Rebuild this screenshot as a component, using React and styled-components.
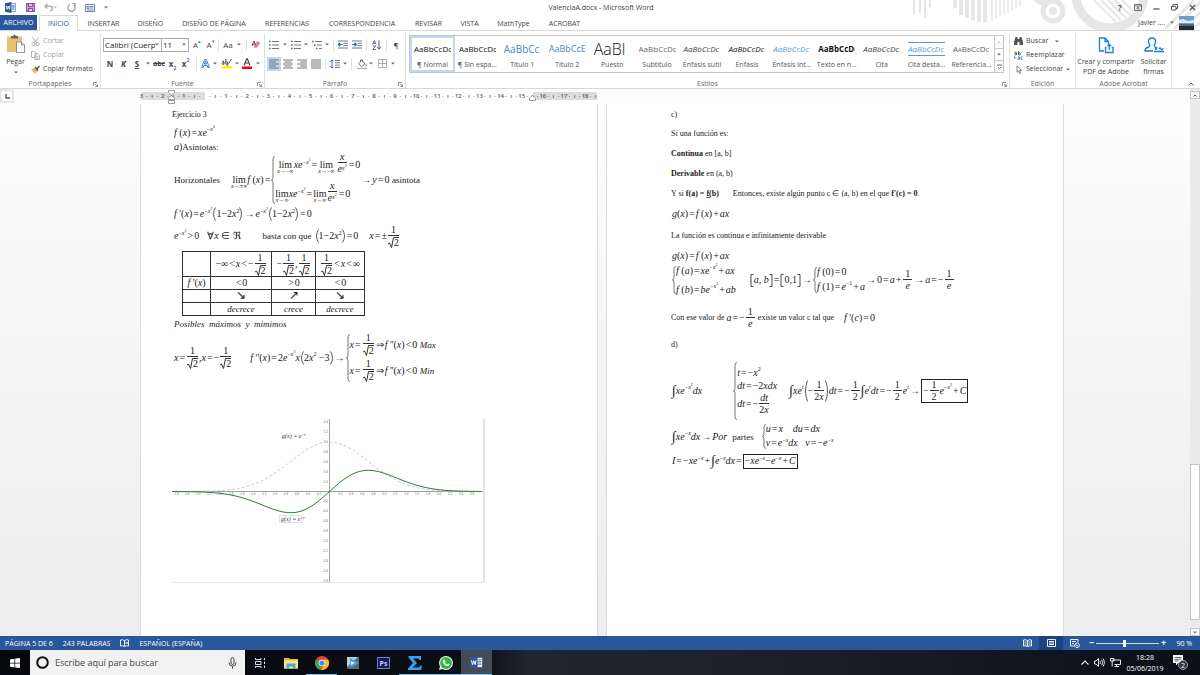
import styled, { createGlobalStyle, css } from 'styled-components';

const GlobalStyle = createGlobalStyle`
    * {
        box-sizing: border-box;
    }
    body {
        margin: 0;
        font-family: 'Open Sans', 'Noto Sans', sans-serif;
        font-size: 7px;
        color: #444;
    }
    button,
    input,
    select {
        margin: 0;
        padding: 0;
        border: 0;
        background: none;
        font: inherit;
        color: inherit;
    }
    svg {
        display: block;
        flex: none;
    }
`;

const Window = styled.div`
    display: flex;
    flex-direction: column;
    height: 100vh;
    min-height: 675px;
    overflow: hidden;
    background: #fff;
`;

/* ---------- title bar and tabs ---------- */

const Header = styled.header`
    position: relative;
`;

const Decoration = styled.svg`
    position: absolute;
    top: 0;
    right: 0;
`;

const TitleBar = styled.div`
    position: relative;
    display: grid;
    grid-template-columns: 1fr auto 1fr;
    align-items: center;
    height: 15px;
    padding: 0 3px 0 5px;
    font-size: 7px;
`;

const QuickAccess = styled.div`
    display: flex;
    align-items: center;
    gap: 9px;
`;

const WindowButtons = styled.div`
    display: flex;
    align-items: center;
    justify-content: flex-end;
    gap: 8px;
`;

const IconButton = styled.button`
    display: flex;
    align-items: center;
    justify-content: center;
    min-width: 10px;
    height: 12px;
    font-size: 8px;
    color: ${(p) => p.$color || '#555'};
`;

const Tabs = styled.nav`
    position: relative;
    display: flex;
    align-items: stretch;
    height: 16px;
    border-bottom: 1px solid #d8d8d8;
`;

const Tab = styled.a`
    display: flex;
    align-items: center;
    justify-content: center;
    margin-bottom: -1px;
    width: ${(p) => p.$w}px;
    color: #444;
    text-decoration: none;
    white-space: nowrap;
    ${(p) =>
        p.$file &&
        css`
            background: #2a579a;
            color: #fff;
            margin-bottom: 0;
            margin-right: 2px;
        `}
    ${(p) =>
        p.$active &&
        css`
            background: #fff;
            border: 1px solid #d8d8d8;
            border-bottom: 0;
            color: #2a579a;
        `}
`;

const Account = styled.div`
    display: flex;
    align-items: center;
    gap: 5px;
    margin-left: auto;
    padding-right: 6px;
`;

/* ---------- ribbon ---------- */

const Ribbon = styled.section`
    display: flex;
    height: 58px;
    padding: 3px 0 0;
    border-bottom: 1px solid #d8d8d8;
`;

const Group = styled.div`
    display: flex;
    flex-direction: column;
    flex: ${(p) => (p.$w ? `0 0 ${p.$w}px` : '1 1 0')};
    min-width: 0;
    border-right: 1px solid #e1e1e1;
`;

const GroupBody = styled.div`
    flex: 1;
    min-height: 0;
    padding-left: ${(p) => p.$pad || 0}px;
`;

const GroupLabel = styled.div`
    display: flex;
    align-items: center;
    justify-content: center;
    position: relative;
    height: 8px;
    line-height: 8px;
    color: #666;
    svg {
        position: absolute;
        right: 2px;
        top: 2px;
    }
`;

const ToolRow = styled.div`
    display: flex;
    align-items: center;
    height: 13px;
    margin-top: ${(p) => p.$top}px;
`;

const Tool = styled.button`
    display: flex;
    align-items: center;
    justify-content: center;
    width: ${(p) => p.$w}px;
    height: 14px;
    font-size: 8px;
    font-weight: ${(p) => (p.$bold ? 700 : 400)};
    font-style: ${(p) => (p.$italic ? 'italic' : 'normal')};
    text-decoration: ${(p) => p.$deco || 'none'};
    color: ${(p) => p.$color || '#444'};
    background: ${(p) => (p.$on ? '#c2d5f2' : 'transparent')};
    sub,
    sup {
        font-size: 5px;
        line-height: 6px;
        color: #3b73b9;
    }
    sup {
        align-self: flex-start;
    }
    sub {
        align-self: flex-end;
    }
`;

const Divider = styled.span`
    display: flex;
    justify-content: center;
    width: ${(p) => p.$w}px;
    &::before {
        content: '';
        width: 1px;
        height: 12px;
        background: #e1e1e1;
    }
`;

const ComboBox = styled.label`
    display: flex;
    align-items: center;
    width: ${(p) => p.$w}px;
    height: 14px;
    padding: 0 2px 0 1px;
    border: 1px solid #ababab;
    font-size: 8px;
    color: #222;
    & + & {
        border-left: 0;
    }
    select {
        appearance: none;
        flex: 1;
        min-width: 0;
        overflow: hidden;
        text-overflow: clip;
    }
`;

const Clipboard = styled.div`
    display: grid;
    grid-template-columns: 31px 1fr;
`;

const BigButton = styled.button`
    display: flex;
    flex-direction: column;
    align-items: center;
    gap: ${(p) => p.$gap || 3}px;
    line-height: 10px;
    font-size: 7px;
    color: #444;
`;

const ButtonList = styled.div`
    display: flex;
    flex-direction: column;
`;

const SmallButton = styled.button`
    display: flex;
    align-items: center;
    gap: 3px;
    height: 14px;
    line-height: 14px;
    white-space: nowrap;
    color: ${(p) => (p.$off ? '#a0a0a0' : '#444')};
`;

const Gallery = styled.div`
    display: flex;
    height: 38px;
    margin: 1px 5px 0 3px;
    border: 1px solid #c6c6c6;
`;

const Styles = styled.div`
    display: grid;
    grid-template-columns: repeat(13, 1fr);
    flex: 1;
    min-width: 0;
`;

const StyleCard = styled.button`
    display: flex;
    flex-direction: column;
    align-items: center;
    min-width: 0;
    padding: ${(p) => (p.$on ? '0 1px' : '2px 3px')};
    border: ${(p) => (p.$on ? '2px solid #c2d5f2' : '0')};
`;

const Sample = styled.span`
    width: 37px;
    height: 22px;
    line-height: 22px;
    overflow: hidden;
    text-align: left;
    white-space: nowrap;
    font-weight: ${(p) => p.$weight || 500};
    font-style: ${(p) => (p.$italic ? 'italic' : 'normal')};
    font-variant: ${(p) => (p.$caps ? 'small-caps' : 'normal')};
    font-size: ${(p) => p.$size || 8}px;
    color: ${(p) => p.$color || '#111'};
`;

const RuledSample = styled(Sample)`
    height: 14px;
    line-height: 12px;
    margin: 4px 0;
    border-top: 1px solid #5b9bd5;
    border-bottom: 1px solid #5b9bd5;
`;

const CardName = styled.span`
    line-height: 10px;
    white-space: nowrap;
    color: #555;
`;

const GalleryScroll = styled.div`
    display: grid;
    grid-template-rows: repeat(3, 1fr);
    width: 9px;
    border-left: 1px solid #c6c6c6;
    button {
        display: flex;
        align-items: center;
        justify-content: center;
    }
    button + button {
        border-top: 1px solid #c6c6c6;
    }
`;

const AcrobatButtons = styled.div`
    display: grid;
    grid-template-columns: 60px 1fr;
    padding-top: 3px;
    white-space: nowrap;
`;

const Collapse = styled.div`
    display: flex;
    flex: 0 0 28px;
    align-items: flex-end;
    justify-content: center;
    padding: 0 0 2px 10px;
`;

/* ---------- ruler and canvas ---------- */

const Workspace = styled.main`
    display: flex;
    flex: 1;
    min-height: 0;
    background: linear-gradient(#fdfdfd 5%, #eee 90%);
`;

const Editor = styled.div`
    display: flex;
    flex-direction: column;
    flex: 1;
    min-width: 0;
`;

const Columns = styled.div`
    display: flex;
    justify-content: center;
    gap: 10px;
    padding-left: 14px;
`;

const RulerRow = styled.div`
    display: grid;
    grid-template-columns: 14px 1fr;
    height: 15px;
`;

const TabSelector = styled.button`
    display: flex;
    align-items: center;
    justify-content: center;
    height: 14px;
    background: #fcfcfc;
    border: 2px solid #e6e6e6;
`;

const RulerColumns = styled(Columns)`
    padding-left: 0;
`;

const Scale = styled.div`
    position: relative;
    display: flex;
    align-items: center;
    justify-content: space-between;
    flex: 0 1 456px;
    height: 8px;
    margin-top: 3px;
    font-size: 6px;
    font-weight: 600;
    color: #555;
    background: linear-gradient(to right, #dcdcdc 14%, #fff 14%, #fff 86%, #dcdcdc 86%);
    span {
        display: flex;
        justify-content: center;
        width: 1px;
    }
`;

const Blank = styled.div`
    flex: 0 1 456px;
`;

const Marker = styled.svg`
    position: absolute;
    left: ${(p) => p.$at}%;
    top: ${(p) => p.$top}px;
`;

const Pages = styled(Columns)`
    flex: 1;
    min-height: 0;
`;

const Page = styled.article`
    flex: 0 1 456px;
    min-width: 0;
    padding-left: ${(p) => p.$pad}px;
    overflow: hidden;
    background: #fff;
    box-shadow: -1px 0 #dcdcdc, 1px 0 #dcdcdc;
    color: #222;
    font-family: 'Liberation Serif', serif;
`;

const Scrollbar = styled.div`
    display: flex;
    flex-direction: column;
    width: 10px;
    padding-top: 2px;
    background: #ebebeb;
    button {
        display: flex;
        align-items: center;
        justify-content: center;
        height: 8px;
        border: 1px solid #c6c6c6;
        background: #fff;
    }
`;

const Track = styled.div`
    display: grid;
    grid-template-rows: 364fr 155fr 8fr;
    flex: 1;
    &::before {
        content: '';
    }
    &::after {
        content: '';
    }
`;

const Thumb = styled.div`
    border: 1px solid #c6c6c6;
    background: #fff;
`;

/* ---------- formulas ---------- */

const Line = styled.div`
    display: flex;
    align-items: center;
    height: ${(p) => p.$h}px;
    margin-top: ${(p) => p.$top || 0}px;
    padding-left: ${(p) => p.$in || 0}px;
    font-size: 8px;
    white-space: pre;
`;

const Formula = styled.span`
    display: inline-flex;
    align-items: center;
    font-size: 10px;
    line-height: 10px;
    white-space: pre;
`;

const Operator = styled.span`
    margin: 0 1px;
`;

const Upright = styled.span`
    font-size: 9px;
`;

const Words = styled.i`
    font-size: 9px;
`;

const SupBox = styled.span`
    display: inline-flex;
    align-items: center;
    padding-bottom: 7px;
    font-size: 6px;
    line-height: 6px;
    white-space: pre;
    & & {
        font-size: 4px;
        line-height: 4px;
        padding-bottom: 4px;
    }
`;

const FracBox = styled.span`
    display: inline-flex;
    flex-direction: column;
    align-items: center;
    margin: 0 1px;
    > span {
        display: flex;
        justify-content: center;
        min-width: 9px;
    }
    > span + span {
        border-top: 1px solid #333;
        padding-top: 1px;
    }
`;

const LimBox = styled.span`
    display: inline-flex;
    flex-direction: column;
    align-items: center;
    line-height: 8px;
    padding-top: 4px;
    small {
        font-size: 6px;
        line-height: 4px;
    }
`;

const RootBox = styled.span`
    display: inline-flex;
    span {
        border-top: 1px solid #333;
        line-height: 10px;
    }
`;

const Stack = styled.span`
    display: inline-flex;
    flex-direction: column;
    align-items: flex-start;
    gap: ${(p) => p.$gap || 0}px;
`;

const Space = styled.span`
    flex: none;
    width: ${(p) => p.$w}px;
`;

const Boxed = styled.span`
    display: inline-flex;
    align-items: center;
    padding: 0 1px;
    border: 1px solid #222;
`;

const IntegralSign = styled.span`
    font-size: 14px;
    line-height: 14px;
`;

const SignTable = styled.table`
    table-layout: fixed;
    width: 183px;
    margin: 1px 0 0 10px;
    border-collapse: collapse;
    td,
    th {
        height: 13px;
        padding: 0;
        border: 1px solid #333;
        text-align: center;
        vertical-align: middle;
        font-weight: 400;
        font-size: 9px;
        line-height: 9px;
    }
    thead th {
        height: 25px;
    }
`;

const Arrow = styled.span`
    font-size: 12px;
`;

const Spelling = styled.b`
    text-decoration: underline #4a5bd0;
`;

const Figure = styled.figure`
    width: 313px;
    margin: 36px 0 0;
    border-right: 2px solid #e3e3e3;
    border-bottom: 1px solid #e3e3e3;
`;

/* ---------- status bar and taskbar ---------- */

const StatusBar = styled.footer`
    display: flex;
    align-items: center;
    flex: none;
    height: 14px;
    padding: 0 8px 0 5px;
    background: #2a579a;
    color: #fff;
    font-size: 7px;
`;

const StatusLeft = styled.div`
    display: flex;
    align-items: center;
    gap: 10px;
    flex: 1;
`;

const ViewButton = styled.button`
    display: flex;
    align-items: center;
    justify-content: center;
    width: 24px;
    height: 14px;
    background: ${(p) => (p.$on ? '#1b4380' : 'transparent')};
`;

const ZoomSlider = styled.input`
    appearance: none;
    width: 63px;
    height: 10px;
    background: linear-gradient(#cfdcef, #cfdcef) center / 100% 1px no-repeat;
    &::-webkit-slider-thumb {
        appearance: none;
        width: 3px;
        height: 7px;
        background: #fff;
    }
`;

const ZoomButton = styled.button`
    width: 9px;
    font-size: 9px;
    font-weight: 700;
    line-height: 12px;
`;

const ZoomValue = styled.span`
    width: 24px;
    text-align: right;
`;

const Taskbar = styled.footer`
    display: flex;
    flex: none;
    height: 25px;
    background: linear-gradient(to right, #05070c, #0b0e14 40%, #20262d 44%, #1a1f27 70%, #0e131c 90%, #0b0f16);
    color: #fff;
`;

const Search = styled.label`
    display: flex;
    align-items: center;
    gap: 6px;
    width: 215px;
    padding: 0 8px 0 6px;
    background: #f2f2f2;
    color: #333;
    input {
        flex: 1;
        min-width: 0;
        font-size: 9px;
        outline: 0;
    }
    input::placeholder {
        color: #444;
        opacity: 1;
    }
`;

const TaskButton = styled.button`
    display: flex;
    align-items: center;
    justify-content: center;
    width: ${(p) => p.$w || 31}px;
    background: ${(p) => (p.$on ? '#454b52' : 'transparent')};
    box-shadow: ${(p) => (p.$open ? 'inset 0 -1px #8ac4ef' : 'none')};
`;

const Tray = styled.div`
    display: flex;
    align-items: center;
    gap: 5px;
    margin-left: auto;
    padding-right: 12px;
`;

const Clock = styled.time`
    width: 38px;
    text-align: center;
    font-size: 7px;
    line-height: 11px;
    white-space: nowrap;
`;

const Notifications = styled.button`
    margin-left: 4px;
`;

/* ---------- drawings ---------- */

function Caret({ color = '#666' }) {
    return (
        <svg width="4" height="3" viewBox="0 0 4 3">
            <path d="M0 0.5h4L2 2.6z" fill={color} />
        </svg>
    );
}

function WordLogo({ size = 11 }) {
    return (
        <svg width={size} height={size} viewBox="0 0 12 12">
            <path d="M6 1.5h5.5v9H6z" fill="#fff" stroke="#2a579a" strokeWidth=".6" />
            <path d="M7 3.5h3.6M7 5h3.6M7 6.5h3.6M7 8h3.6" stroke="#2a579a" strokeWidth=".7" />
            <path d="M0 1.3 7 0v12L0 10.7z" fill="#2a579a" />
            <path d="m1.4 4 .9 4 1.2-3.6L4.7 8l.9-4" fill="none" stroke="#fff" strokeWidth=".9" />
        </svg>
    );
}

function Stroke({ w = 10, h = 10, color = 'currentColor', width = 1, children, d }) {
    return (
        <svg width={w} height={h} viewBox={`0 0 ${w} ${h}`} fill="none" stroke={color} strokeWidth={width}>
            {d && <path d={d} />}
            {children}
        </svg>
    );
}

function HeaderArt() {
    const bars = [
        [4, 14], [10, 13], [15, 18], [20, 7], [45, 8], [51, 15], [57, 18], [63, 20], [69, 22], [75, 22],
    ];
    return (
        <Decoration width="290" height="30" viewBox="0 0 290 30" fill="none" stroke="#e6e6e6">
            {bars.map(([x, h]) => (
                <path key={x} d={`M${x} 0V${h}`} strokeWidth={x < 40 ? 2 : 4} />
            ))}
            {[82, 86, 90, 94, 98, 102, 106, 110].map((x, i) => (
                <path key={x} d={`M${x} 0V${21 - i * 2}`} strokeWidth="1.5" />
            ))}
            <path d="M124 0q7 10 15 0z" fill="#e6e6e6" stroke="none" />
            <circle cx="143" cy="11" r="10" strokeWidth="5" />
            <circle cx="143" cy="11" r="4" fill="#e6e6e6" stroke="none" />
            <circle cx="200" cy="-6" r="34" strokeWidth="9" />
            <path d="M184 0l22 22M191 0l20 20M198 0l18 18M205 0l15 15M212 0l11 11" strokeWidth="2" />
            <path d="M290 2l-26 27M290 12l-17 18M284 0l-28 28M290 22l-8 8" strokeWidth="3" />
        </Decoration>
    );
}

function Launcher() {
    return <Stroke w={5} h={5} color="#777" width={0.8} d="M.5 4V.5H4M2 2l2.5 2.5M4.5 2.3v2.2H2.3" />;
}

function Lines({ align = 'left' }) {
    const rows = [10, 7, 10, 7, 10];
    return (
        <svg width="10" height="10" viewBox="0 0 10 10" stroke="#666" strokeWidth=".9">
            {rows.map((len, i) => {
                const n = align === 'justify' ? 10 : len;
                const x = { left: 0, justify: 0, center: (10 - n) / 2, right: 10 - n }[align];
                return <path key={i} d={`M${x} ${1 + i * 2}h${n}`} />;
            })}
        </svg>
    );
}

function ListIcon({ step = 0 }) {
    return (
        <svg width="10" height="10" viewBox="0 0 10 10" strokeWidth="1">
            {[1.5, 5, 8.5].map((y, i) => (
                <g key={y}>
                    <path d={`M${i * step} ${y}h1.6`} stroke="#3b73b9" strokeWidth="1.5" />
                    <path d={`M${3 + i * step} ${y}H10`} stroke="#777" />
                </g>
            ))}
        </svg>
    );
}

function IndentIcon({ flip }) {
    return (
        <svg width="10" height="9" viewBox="0 0 10 9" fill="none" strokeWidth="1">
            <path d="M0 1h10M5.5 3.3H10M5.5 5.6H10M0 8h10" stroke="#777" />
            <path d={flip ? 'M0 4.5h4M2.5 2.8l2 1.7-2 1.7' : 'M.5 4.5h4M2.2 2.8.4 4.5l1.8 1.7'} stroke="#2f6db5" strokeWidth="1.2" />
        </svg>
    );
}

function Brace({ h }) {
    const m = h / 2;
    return (
        <svg width="4" height={h} viewBox={`0 0 4 ${h}`} fill="none" stroke="#555" strokeWidth=".8">
            <path d={`M4 .5Q2 .5 2 3V${m - 2.5}Q2 ${m} .3 ${m}Q2 ${m} 2 ${m + 2.5}V${h - 3}Q2 ${h - 0.5} 4 ${h - 0.5}`} />
        </svg>
    );
}

function Paren({ h, right }) {
    const d = right ? `M.5 .5Q4.5 ${h / 2} .5 ${h - 0.5}` : `M3.5 .5Q-.5 ${h / 2} 3.5 ${h - 0.5}`;
    return (
        <svg width="4" height={h} viewBox={`0 0 4 ${h}`} fill="none" stroke="#333" strokeWidth=".8">
            <path d={d} />
        </svg>
    );
}

function Bracket({ right }) {
    return <Stroke w={4} h={13} color="#333" width={0.9} d={right ? 'M.5 .5H3v12H.5' : 'M3.5 .5H1v12h2.5'} />;
}

/* letters slanted, digits upright, a thin gap round each operator */
function M({ children }) {
    return (
        <Formula>
            {String(children)
                .split(/([A-Za-zÀ-ÿ]+)| *([=+<>→⇒]) */)
                .map((part, i) => {
                    if (!part) return null;
                    if (i % 3 === 1) return <i key={i}>{part}</i>;
                    if (i % 3 === 2) return <Operator key={i}>{part}</Operator>;
                    return <span key={i}>{part}</span>;
                })}
        </Formula>
    );
}

function Sup({ children }) {
    return <SupBox>{children}</SupBox>;
}

function ExpSq() {
    return (
        <Sup>
            −<i>x</i>
            <SupBox>2</SupBox>
        </Sup>
    );
}

function ExpX() {
    return (
        <Sup>
            −<i>x</i>
        </Sup>
    );
}

function Frac({ top, children }) {
    return (
        <FracBox>
            <span>{top}</span>
            <span>{children}</span>
        </FracBox>
    );
}

function Root() {
    return (
        <RootBox>
            <Stroke w={6} h={11} color="#333" width={1} d="M0 7l1.5-1L3.5 10.5 5.5.5H6" />
            <span>2</span>
        </RootBox>
    );
}

function OneOverRoot() {
    return <Frac top="1"><Root /></Frac>;
}

function XOverExp() {
    return (
        <Frac top={<i>x</i>}>
            <i>e</i>
            <Sup><i>x</i><SupBox>2</SupBox></Sup>
        </Frac>
    );
}

function Lim({ to }) {
    return (
        <LimBox>
            lim
            <small>
                <i>x</i>→{to}
            </small>
        </LimBox>
    );
}

function Parens({ children, h = 14 }) {
    return (
        <Formula>
            <Paren h={h} />
            {children}
            <Paren h={h} right />
        </Formula>
    );
}

function Integral() {
    return <IntegralSign>∫</IntegralSign>;
}

function Plot() {
    const curve = (f) => {
        const pts = [];
        for (let px = 0; px <= 311; px += 3) {
            const x = (px - 157.5) / 54.8;
            pts.push(`${px},${(72.5 - f(x) * 49.5).toFixed(2)}`);
        }
        return pts.join(' ');
    };
    const xs = Array.from({ length: 28 }, (_, i) => i - 14).filter((n) => n !== 0);
    const ys = Array.from({ length: 17 }, (_, i) => i - 9).filter((n) => n !== 0);
    return (
        <Figure>
            <svg width="311" height="163" viewBox="0 0 311 163" fontSize="3" fill="#666" fontFamily="Liberation Sans, sans-serif">
                <path d="M157.5 0v163M0 72.5h311" stroke="#8a8a8a" strokeWidth=".8" />
                {xs.map((n) => (
                    <text key={n} x={157.5 + n * 10.96} y="76" textAnchor="middle">
                        {(n / 5).toFixed(1)}
                    </text>
                ))}
                {ys.map((n) => (
                    <text key={n} x="156" y={73.5 - n * 9.9} textAnchor="end">
                        {(n / 5).toFixed(1)}
                    </text>
                ))}
                <polyline points={curve((x) => Math.exp(-x * x))} fill="none" stroke="#c3bcf5" strokeWidth=".9" strokeDasharray="3 2" />
                <polyline points={curve((x) => x * Math.exp(-x * x))} fill="none" stroke="#2f8132" strokeWidth="1" />
                <rect x="107.5" y="96.5" width="22" height="7" fill="#fff" stroke="#ccc" strokeWidth=".6" />
                <g fontSize="6" fontFamily="Liberation Serif, serif" fontStyle="italic" fill="#333">
                    <text x="110" y="19">
                        g(x) = e<tspan fontSize="3" dy="-2">−x²</tspan>
                    </text>
                    <text x="109" y="102">
                        g(x) = e<tspan fontSize="3" dy="-2">−x²</tspan>
                    </text>
                </g>
            </svg>
        </Figure>
    );
}

/* ---------- sections ---------- */

const tabs = [
    ['INSERTAR', 51],
    ['DISEÑO', 43],
    ['DISEÑO DE PÁGINA', 84],
    ['REFERENCIAS', 62],
    ['CORRESPONDENCIA', 88],
    ['REVISAR', 45],
    ['VISTA', 37],
    ['MathType', 51],
    ['ACROBAT', 51],
];

const gallery = [
    { name: '¶ Normal', on: true },
    { name: '¶ Sin espa...' },
    { name: 'Título 1', color: '#4a8ac4', size: 10, text: 'AaBbCc', weight: 400 },
    { name: 'Título 2', color: '#4a8ac4', size: 9, text: 'AaBbCcE', weight: 400 },
    { name: 'Puesto', size: 16, text: 'AaBl', weight: 300 },
    { name: 'Subtítulo', color: '#6a6a6a' },
    { name: 'Énfasis sutil', color: '#444', italic: true },
    { name: 'Énfasis', italic: true },
    { name: 'Énfasis int...', color: '#5b9bd5', italic: true },
    { name: 'Texto en n...', weight: 700 },
    { name: 'Cita', color: '#444', italic: true },
    { name: 'Cita desta...', color: '#5b9bd5', italic: true, ruled: true },
    { name: 'Referencia...', color: '#5a5a5a', caps: true },
];

function Top() {
    return (
        <Header>
            <HeaderArt />
            <TitleBar>
                <QuickAccess>
                    <WordLogo />
                    <IconButton aria-label="Guardar">
                        <Stroke w={9} h={9} color="#8b4bab" width={1.3} d="M.7.7h7.600v7.600H.7zM2.500.5v3h4v-3M2.500 8.500v-3h4v3" />
                    </IconButton>
                    <IconButton aria-label="Deshacer" $color="#aaa">
                        <Stroke w={9} h={9} width={1.3} d="M3.5 1 1 3.2l2.500 2.200M1.200 3.200H6q2.300 0 2.300 2.200T6 8" />
                        <Caret color="#bbb" />
                    </IconButton>
                    <IconButton aria-label="Rehacer" $color="#999">
                        <Stroke w={9} h={9} width={1.2} d="M7 2.2A3.600 3.600 0 1 1 3 1.500M5.500.7h2.600v2.600" />
                    </IconButton>
                    <IconButton aria-label="Formulario">
                        <Stroke w={10} h={8} color="#5d7aa5" width={0.9} d="M.5.5h9v7h-9zM2 2.500h2v2H2zM5 2.500h3.500M5 4h3.500M2 6h6.500" />
                    </IconButton>
                    <Caret />
                </QuickAccess>
                <span>ValenciaA.docx - Microsoft Word</span>
                <WindowButtons>
                    <IconButton aria-label="Ayuda"><b>?</b></IconButton>
                    <IconButton aria-label="Opciones de cinta">
                        <Stroke w={8} h={7} d="M.5.5h7v6h-7zM.5 2h7M4 5.800V3.400M2.700 4.500 4 3.200l1.300 1.300" width={0.8} />
                    </IconButton>
                    <IconButton aria-label="Minimizar"><Stroke w={7} h={7} d="M.5 5h6" width={1.3} /></IconButton>
                    <IconButton aria-label="Restaurar">
                        <Stroke w={7} h={7} d="M.5 2.500h4.500v3.500H.5zM2 2.500v-2h4.500v4H5" />
                    </IconButton>
                    <IconButton aria-label="Cerrar"><Stroke w={7} h={7} d="M1 1l5 5M6 1 1 6" width={1.2} /></IconButton>
                </WindowButtons>
            </TitleBar>
            <Tabs>
                <Tab href="#archivo" $w={37} $file>ARCHIVO</Tab>
                <Tab href="#inicio" $w={39} $active>INICIO</Tab>
                {tabs.map(([name, w]) => (
                    <Tab key={name} href={`#${name}`} $w={w}>{name}</Tab>
                ))}
                <Account>
                    javier ....
                    <Caret />
                    <svg width="15" height="14" viewBox="0 0 15 14">
                        <path d="M0 0h15v14H0z" fill="#6f9cc8" />
                        <path d="M0 4l4-1 5 2 6-1v3H0z" fill="#dfe9f2" />
                        <path d="M0 8h15v2H0z" fill="#4b6a80" />
                        <path d="M0 10h15v4H0z" fill="#232b31" />
                    </svg>
                </Account>
            </Tabs>
        </Header>
    );
}

function ClipboardGroup() {
    return (
        <Group $w={101}>
            <GroupBody>
                <Clipboard>
                    <BigButton $gap={4}>
                        <svg width="18" height="19" viewBox="0 0 18 19">
                            <path d="M0 2.5h15V18H0z" fill="#ebc16f" />
                            <path d="M4 4.5V2h2q1.500-3 3 0h2v2.500z" fill="#666" />
                            <path d="M9.500 8h5l3 3v7.500h-8z" fill="#fff" stroke="#777" strokeWidth=".8" />
                            <path d="M14.500 8v3h3" fill="none" stroke="#777" strokeWidth=".8" />
                        </svg>
                        Pegar
                        <Caret />
                    </BigButton>
                    <ButtonList>
                        <SmallButton $off>
                            <Stroke w={9} h={9} color="#aaa" d="M1.500 .5 6 6M7.500.5 3 6M2.500 5.500a1.500 1.500 0 1 0 .1 0zM6.500 5.500a1.500 1.500 0 1 0 .1 0z" />
                            Cortar
                        </SmallButton>
                        <SmallButton $off>
                            <Stroke w={9} h={9} color="#aaa" width={0.9} d="M.5.5h3l1.500 1.500v4.500h-4.500zM4 2.500h2.500L8.500 4.300v4.200H4zM5.300 5.300h2M5.300 7h2" />
                            Copiar
                        </SmallButton>
                        <SmallButton>
                            <svg width="9" height="9" viewBox="0 0 9 9">
                                <path d="M0 4.500 3.500 3 6 6 4.500 9z" fill="#ebb35c" />
                                <path d="M3.500 2.500 5 1.500 5.800 3 8 .5l1 1L6.800 4l.7 1-1.300 1.200z" fill="#555" />
                            </svg>
                            Copiar formato
                        </SmallButton>
                    </ButtonList>
                </Clipboard>
            </GroupBody>
            <GroupLabel>Portapapeles <Launcher /></GroupLabel>
        </Group>
    );
}

function FontGroup() {
    return (
        <Group $w={164}>
            <GroupBody $pad={2}>
                <ToolRow $top={4}>
                    <ComboBox $w={59}>
                        <select aria-label="Fuente"><option>Calibri (Cuerpo)</option></select>
                        <Caret />
                    </ComboBox>
                    <ComboBox $w={27}>
                        <select aria-label="Tamaño"><option>11</option></select>
                        <Caret />
                    </ComboBox>
                    <Tool $w={16}>A<sup>▴</sup></Tool>
                    <Tool $w={11}>A<sup>▾</sup></Tool>
                    <Divider $w={4} />
                    <Tool $w={16}>Aa</Tool>
                    <Tool $w={5} aria-label="Más"><Caret /></Tool>
                    <Divider $w={10} />
                    <Tool $w={10} aria-label="Borrar formato">
                        <svg width="10" height="9" viewBox="0 0 10 9">
                            <path d="M3 5 6.500 1 9.500 3 6 7.500 3.500 8z" fill="#e5809b" />
                            <path d="M1 6 2.800 1l1.700 4M1.600 4.200h2" fill="none" stroke="#555" />
                        </svg>
                    </Tool>
                </ToolRow>
                <ToolRow $top={6}>
                    <Tool $w={14} $bold>N</Tool>
                    <Tool $w={13} $bold $italic>K</Tool>
                    <Tool $w={14} $bold $deco="underline">S</Tool>
                    <Tool $w={8} aria-label="Subrayados"><Caret /></Tool>
                    <Tool $w={14} $bold $deco="line-through"><small>abc</small></Tool>
                    <Tool $w={13} $bold>x<sub>2</sub></Tool>
                    <Tool $w={13} $bold>x<sup>2</sup></Tool>
                    <Divider $w={8} />
                    <Tool $w={11} aria-label="Efectos de texto">
                        <Stroke w={9} h={9} color="#3b73b9" width={0.9} d="M.6 8.500 3.600.6h1.800L8.400 8.500H6.800L6.200 6.500H2.800L2.200 8.500zM3.300 5h2.400L4.500 2z" />
                    </Tool>
                    <Tool $w={8} aria-label="Efectos"><Caret /></Tool>
                    <Tool $w={14} aria-label="Resaltado">
                        <svg width="11" height="11" viewBox="0 0 11 11">
                            <path d="M1 8h10v2.500H0z" fill="#fff200" />
                            <path d="M1 3.500q2-1 2 .5v2.500M3 4.500Q1 4.500 1 5.700T3 6M4.800 1v5.300q2 .3 2-1.300t-2-1.300M10.500 1 7.500 5.500 6 8" fill="none" stroke="#555" />
                        </svg>
                    </Tool>
                    <Tool $w={7} aria-label="Colores de resaltado"><Caret /></Tool>
                    <Tool $w={14} aria-label="Color de fuente">
                        <svg width="10" height="11" viewBox="0 0 10 11">
                            <path d="M0 8.500h10V11H0z" fill="#f00" />
                            <path d="M2 7.500 4.700.8h.6L8 7.500M3 5h4" fill="none" stroke="#444" strokeWidth="1.100" />
                        </svg>
                    </Tool>
                    <Tool $w={8} aria-label="Colores"><Caret /></Tool>
                </ToolRow>
            </GroupBody>
            <GroupLabel>Fuente <Launcher /></GroupLabel>
        </Group>
    );
}

function ParagraphGroup() {
    return (
        <Group $w={141}>
            <GroupBody $pad={2}>
                <ToolRow $top={4}>
                    <Tool $w={14} aria-label="Viñetas"><ListIcon /></Tool>
                    <Tool $w={8} aria-label="Más viñetas"><Caret /></Tool>
                    <Tool $w={13} aria-label="Numeración"><ListIcon /></Tool>
                    <Tool $w={8} aria-label="Más numeración"><Caret /></Tool>
                    <Tool $w={13} aria-label="Multinivel"><ListIcon step={2} /></Tool>
                    <Tool $w={7} aria-label="Más niveles"><Caret /></Tool>
                    <Divider $w={6} />
                    <Tool $w={14} aria-label="Reducir sangría"><IndentIcon /></Tool>
                    <Tool $w={14} aria-label="Aumentar sangría"><IndentIcon flip /></Tool>
                    <Divider $w={5} />
                    <Tool $w={14} aria-label="Ordenar">
                        <svg width="9" height="10" viewBox="0 0 9 10" fill="none">
                            <path d="M.5 4.500 2.300.5l1.800 4M1 3.300h2.500" stroke="#3b73b9" />
                            <path d="M.7 6h3L.7 9.500h3.200" stroke="#8b4bab" />
                            <path d="M7 .5v8.500M5.300 7.200 7 9.200l1.700-2" stroke="#555" />
                        </svg>
                    </Tool>
                    <Divider $w={6} />
                    <Tool $w={14}>¶</Tool>
                </ToolRow>
                <ToolRow $top={6}>
                    <Tool $w={14} $on aria-label="Izquierda"><Lines /></Tool>
                    <Tool $w={14} aria-label="Centrar"><Lines align="center" /></Tool>
                    <Tool $w={14} aria-label="Derecha"><Lines align="right" /></Tool>
                    <Tool $w={13} aria-label="Justificar"><Lines align="justify" /></Tool>
                    <Divider $w={6} />
                    <Tool $w={14} aria-label="Interlineado">
                        <svg width="10" height="10" viewBox="0 0 10 10" fill="none">
                            <path d="M2 1v8M.5 2.500 2 .8l1.500 1.700M.5 7.500 2 9.200l1.500-1.700" stroke="#3b73b9" />
                            <path d="M5 1.500h5M5 3.800h5M5 6.200h5M5 8.500h5" stroke="#777" />
                        </svg>
                    </Tool>
                    <Tool $w={5} aria-label="Más interlineado"><Caret /></Tool>
                    <Divider $w={8} />
                    <Tool $w={13} aria-label="Sombreado">
                        <svg width="10" height="10" viewBox="0 0 10 10" fill="none" stroke="#666" strokeWidth=".9">
                            <path d="M4.500 1.500 8 4.500 4.500 7.500 1.500 4.800zM3.500 3V1q1-1 2 0v1.500M8 4.500q1.500 1 1 3" />
                            <path d="M0 9.300h10" stroke="#999" />
                        </svg>
                    </Tool>
                    <Tool $w={6} aria-label="Más sombreado"><Caret /></Tool>
                    <Tool $w={16} aria-label="Bordes">
                        <Stroke w={9} h={9} color="#999" width={0.8} d="M.5.5h8v8h-8zM4.500.5v8M.5 4.500h8" />
                    </Tool>
                    <Tool $w={6} aria-label="Más bordes"><Caret /></Tool>
                </ToolRow>
            </GroupBody>
            <GroupLabel>Párrafo <Launcher /></GroupLabel>
        </Group>
    );
}

function StylesGroup() {
    return (
        <Group>
            <GroupBody>
                <Gallery>
                    <Styles>
                        {gallery.map((s) => {
                            const Text = s.ruled ? RuledSample : Sample;
                            return (
                                <StyleCard key={s.name} $on={s.on}>
                                    <Text
                                        $color={s.color}
                                        $size={s.size}
                                        $italic={s.italic}
                                        $weight={s.weight}
                                        $caps={s.caps}
                                    >
                                        {s.text || 'AaBbCcDc'}
                                    </Text>
                                    <CardName>{s.name}</CardName>
                                </StyleCard>
                            );
                        })}
                    </Styles>
                    <GalleryScroll>
                        <button aria-label="Anterior"><Stroke w={4} h={3} color="#bbb" d="M.5 2.500 2 1l1.500 1.500" /></button>
                        <button aria-label="Siguiente"><Caret /></button>
                        <button aria-label="Más estilos"><Stroke w={5} h={6} d="M0 1h5M1 3l1.500 1.500L4 3" color="#666" /></button>
                    </GalleryScroll>
                </Gallery>
            </GroupBody>
            <GroupLabel>Estilos <Launcher /></GroupLabel>
        </Group>
    );
}

function EditGroup() {
    return (
        <Group $w={66}>
            <GroupBody $pad={4}>
                <ButtonList>
                    <SmallButton>
                        <svg width="9" height="8" viewBox="0 0 9 8" fill="#555">
                            <path d="M1.500 0h2v2h2V0h2L9 5v3H5.500V5h-2v3H0V5z" />
                        </svg>
                        Buscar <Space $w={1} /> <Caret />
                    </SmallButton>
                    <SmallButton>
                        <svg width="9" height="9" viewBox="0 0 9 9" fill="none">
                            <path d="M.5 1.500q2-1 2 .5v2M2.500 2.500Q.5 2.500.7 3.500T2.500 3.500M4.500 0v4q2 .3 2-1.200t-2-1.200" stroke="#555" strokeWidth=".9" />
                            <path d="M.5 5.500V7H2.500M4 6q1.500-1 1.500.5v2M5.500 7Q4 7 4 8t1.500.3M8.800 6Q7 5.500 7 7.200t1.800 1.200" stroke="#3b73b9" strokeWidth=".9" />
                        </svg>
                        Reemplazar
                    </SmallButton>
                    <SmallButton>
                        <Stroke w={9} h={9} color="#666" width={0.8} d="M3 .8v6.500l1.500-1.400L5.600 8.500l1-.5L5.600 5.500h2z" />
                        Seleccionar <Caret />
                    </SmallButton>
                </ButtonList>
            </GroupBody>
            <GroupLabel>Edición</GroupLabel>
        </Group>
    );
}

function AcrobatGroup() {
    return (
        <Group $w={96}>
            <GroupBody>
                <AcrobatButtons>
                    <BigButton>
                        <Stroke w={16} h={17} color="#1a7be0" width={1.300} d="M6 14H1.500V1H7l3.500 3.500V7M7 1v3.500h3.500M8.500 10.500H7.500V15.500H15V10.500H13.500M11.200 13V7.500M9.500 9l1.700-1.700L13 9" />
                        <span>Crear y compartir<br />PDF de Adobe</span>
                    </BigButton>
                    <BigButton>
                        <Stroke w={20} h={17} color="#1a7be0" width={1.300} d="M8 1q3.500 0 3.500 3.500 0 2-1.300 3.500 0 1.500 1 2M8 1Q4.500 1 4.500 4.500q0 2 1.300 3.500 0 2-2.300 2.500Q1 11 1 14h8M10 14.500h10M11 10l2 2.500M13 10l-2 2.500M15 12q1-2 2 0t2-1" />
                        <span>Solicitar<br />firmas</span>
                    </BigButton>
                </AcrobatButtons>
            </GroupBody>
            <GroupLabel>Adobe Acrobat</GroupLabel>
        </Group>
    );
}

function Ruler() {
    const marks = [];
    for (let q = -12; q <= 74; q++) {
        if (q % 4 === 0) marks.push(q === 0 ? '' : Math.abs(q / 4));
        else marks.push(q % 2 === 0 ? 'ı' : '·');
    }
    return (
        <RulerRow>
            <TabSelector aria-label="Tabulación"><Stroke w={5} h={5} d="M1 0v4h4" color="#555" width={1.400} /></TabSelector>
            <RulerColumns>
                <Scale>
                    {marks.map((m, i) => <span key={i}>{m}</span>)}
                    <Marker $at={6} $top={-2} width="7" height="14" viewBox="0 0 7 14" fill="#fff" stroke="#888" strokeWidth=".8">
                        <path d="M.5.5h6v2L3.500 5 .5 2.500zM3.500 5.500 6.500 8v1.500h-6V8zM.5 10.500h6v3h-6z" />
                    </Marker>
                    <Marker $at={85} $top={3} width="7" height="6" viewBox="0 0 7 6" fill="#fff" stroke="#888" strokeWidth=".8">
                        <path d="M3.500.5 6.500 3v2.500h-6V3z" />
                    </Marker>
                </Scale>
                <Blank />
            </RulerColumns>
        </RulerRow>
    );
}

function LeftPage() {
    return (
        <Page $pad={31}>
            <Line $h={20}>Ejercicio 3</Line>
            <Line $h={17} $in={2}><M>f (x) = xe</M><ExpSq /></Line>
            <Line $h={12} $in={2}><M>a)</M><Upright>Asintotas:</Upright></Line>
            <Line $h={53} $in={2}>
                <Upright>Horizontales</Upright>
                <Space $w={11} />
                <Formula><Lim to="±∞" /><M>f (x) = </M></Formula>
                <Brace h={48} />
                <Stack $gap={2}>
                    <Formula><Space $w={2} /><Lim to="−∞" /><M>xe</M><ExpSq /><M> = </M><Lim to="−∞" /><Space $w={2} /><XOverExp /><M>= 0</M></Formula>
                    <Formula><Lim to="∞" /><M>xe</M><ExpSq /><M> = </M><Lim to="∞" /><XOverExp /><M>= 0</M></Formula>
                </Stack>
                <M>→ y = 0 </M><Upright>asintota</Upright>
            </Line>
            <Line $h={16} $in={2}>
                <M>f '(x) = e</M><ExpSq /><Parens><M>1−2x</M><Sup>2</Sup></Parens><M>→e</M><ExpSq /><Parens><M>1−2x</M><Sup>2</Sup></Parens><M>= 0</M>
            </Line>
            <Line $h={28} $in={2}>
                <M>e</M><ExpSq /><M>{'> 0'}</M><Space $w={8} /><M>∀x ∈ ℜ</M><Space $w={22} /><Upright>basta con que</Upright>
                <Space $w={3} /><Parens><M>1−2x</M><Sup>2</Sup></Parens><M>= 0</M><Space $w={11} /><M>x = ±</M><Formula><OneOverRoot /></Formula>
            </Line>
            <SignTable>
                <colgroup>
                    <col width="28" /><col width="61" /><col width="44" /><col width="49" />
                </colgroup>
                <thead>
                    <tr>
                        <th />
                        <th><Formula><M>{'−∞ < x < −'}</M><OneOverRoot /></Formula></th>
                        <th><Formula>−<OneOverRoot />,<OneOverRoot /></Formula></th>
                        <th><Formula><OneOverRoot /><M>{'< x < ∞'}</M></Formula></th>
                    </tr>
                </thead>
                <tbody>
                    <tr><td><M>f '(x)</M></td><td><M>{'< 0'}</M></td><td><M>{'> 0'}</M></td><td><M>{'< 0'}</M></td></tr>
                    <tr><td /><td><Arrow>↘</Arrow></td><td><Arrow>↗</Arrow></td><td><Arrow>↘</Arrow></td></tr>
                    <tr><td /><td><i>decrece</i></td><td><i>crece</i></td><td><i>decrece</i></td></tr>
                </tbody>
            </SignTable>
            <Line $h={16} $in={2}><Words>{'Posibles  máximos  y  mimimos'}</Words></Line>
            <Line $h={51} $in={2}>
                <Formula><M>x = </M><OneOverRoot /><M>,x = −</M><OneOverRoot /></Formula>
                <Space $w={18} />
                <M>f ''(x) = 2e</M><ExpSq /><M>x</M><Parens><M>2x</M><Sup>2</Sup><M> −3</M></Parens><M>→</M>
                <Brace h={48} />
                <Stack $gap={3}>
                    <Formula><M>x = </M><OneOverRoot /><M>{' ⇒ f \'\'(x) < 0 '}</M><Words>Max</Words></Formula>
                    <Formula><M>x = </M><OneOverRoot /><M>{' ⇒ f \'\'(x) < 0 '}</M><Words>Min</Words></Formula>
                </Stack>
            </Line>
            <Plot />
        </Page>
    );
}

function RightPage() {
    return (
        <Page $pad={64}>
            <Line $h={20}>c)</Line>
            <Line $h={19}>Si una función es:</Line>
            <Line $h={20}><b>Continua</b> en [a, b]</Line>
            <Line $h={20}><b>Derivable</b> en (a, b)</Line>
            <Line $h={21}>
                Y si <b>f(a) = </b><Spelling>f(</Spelling><b>b)</b><Space $w={14} />Entonces, existe algún punto c ∈ (a, b) en el que <b>f'(c) = 0</b>.
            </Line>
            <Line $h={19} $in={1}><M>g(x) = f (x) + ax</M></Line>
            <Line $h={25}>La función es continua e infinitamente derivable</Line>
            <Line $h={16} $in={1}><M>g(x) = f (x) + ax</M></Line>
            <Line $h={32} $in={1}>
                <Brace h={28} />
                <Stack $gap={4}>
                    <Formula><M>f (a) = xe</M><ExpSq /><M>+ ax</M></Formula>
                    <Formula><M>f (b) = be</M><ExpSq /><M>+ ab</M></Formula>
                </Stack>
                <Space $w={14} />
                <Bracket /><M>a, b</M><Bracket right /><M> = </M><Bracket /><M>0,1</M><Bracket right /><M> → </M>
                <Brace h={26} />
                <Stack $gap={3}>
                    <M>f (0) = 0</M>
                    <Formula><M>f (1) = e</M><Sup>−1</Sup><M>+ a</M></Formula>
                </Stack>
                <Formula><M>{'→ 0 = a + '}</M><Frac top="1"><i>e</i></Frac><M>→a = −</M><Frac top="1"><i>e</i></Frac></Formula>
            </Line>
            <Line $h={43}>
                Con ese valor de <Formula><M>a = −</M><Frac top="1"><i>e</i></Frac></Formula> existe un valor c tal que <Space $w={8} /><M>f '(c) = 0</M>
            </Line>
            <Line $h={10}>d)</Line>
            <Line $h={61} $top={11} $in={1}>
                <Formula><Integral /><M>xe</M><ExpSq /><M>dx</M></Formula>
                <Space $w={31} />
                <Brace h={58} />
                <Stack $gap={2}>
                    <Formula><M>t = −x</M><Sup>2</Sup></Formula>
                    <M>dt = −2xdx</M>
                    <Formula><M>dt = −</M><Frac top={<i>dt</i>}>2<i>x</i></Frac></Formula>
                </Stack>
                <Space $w={12} />
                <Formula>
                    <Integral /><M>xe</M><Sup><i>t</i></Sup><Parens h={22}>−<Frac top="1">2<i>x</i></Frac></Parens><M>dt = −</M>
                    <Frac top="1">2</Frac><Integral /><M>e</M><Sup><i>t</i></Sup><M>dt = −</M><Frac top="1">2</Frac><M>e</M><Sup><i>t</i></Sup><M> → </M>
                    <Boxed>−<Frac top="1">2</Frac><M>e</M><ExpSq /><M>+ C</M></Boxed>
                </Formula>
            </Line>
            <Line $h={31} $in={1}>
                <Formula><Integral /><M>xe</M><ExpX /><M>{'dx → Por  '}</M><Upright>partes</Upright></Formula>
                <Space $w={8} />
                <Brace h={25} />
                <Stack $gap={3}>
                    <M>{'u = x    du = dx'}</M>
                    <Formula><M>v = e</M><ExpX /><M>{'dx   v = −e'}</M><ExpX /></Formula>
                </Stack>
            </Line>
            <Line $h={18} $in={1}>
                <Formula><M>I = −xe</M><ExpX /><M> + </M><Integral /><M>e</M><ExpX /><M>dx =</M><Boxed><M>−xe</M><ExpX /><M>−e</M><ExpX /><M>+ C</M></Boxed></Formula>
            </Line>
        </Page>
    );
}

function Status() {
    return (
        <StatusBar>
            <StatusLeft>
                <span>PÁGINA 5 DE 6</span>
                <span>243 PALABRAS</span>
                <Stroke w={9} h={8} width={0.9} d="M4.500 1.500Q2.500.2.500 1v6q2-.8 4 .5 2-1.300 4-.5V1q-2-.8-4 .5v6M5.800 3l1.700 2M7.500 3 5.800 5" />
                <span>ESPAÑOL (ESPAÑA)</span>
            </StatusLeft>
            <ViewButton aria-label="Modo de lectura"><Stroke w={9} h={8} width={0.9} d="M4.500 1.500Q2.500.2.500 1v6q2-.8 4 .5 2-1.300 4-.5V1q-2-.8-4 .5v6M1.500 3h2M1.500 5h2M5.500 3h2M5.500 5h2" /></ViewButton>
            <ViewButton $on aria-label="Diseño de impresión"><Stroke w={9} h={8} width={0.9} d="M.5.5h8v7h-8zM2 2.500h5M2 4h5M2 5.500h5" /></ViewButton>
            <ViewButton aria-label="Diseño web"><Stroke w={10} h={9} width={0.9} d="M5 7H.5V.5h7.500V3M2 2.500h4M2 4.500h2M7 4a2.300 2.300 0 1 0 .1 0zM5.500 5.500l3 2" /></ViewButton>
            <ZoomButton aria-label="Alejar">−</ZoomButton>
            <ZoomSlider type="range" min="10" max="190" defaultValue="90" aria-label="Zoom" />
            <ZoomButton aria-label="Acercar">+</ZoomButton>
            <ZoomValue>90 %</ZoomValue>
        </StatusBar>
    );
}

function WindowsTaskbar() {
    return (
        <Taskbar>
            <TaskButton $w={30} aria-label="Inicio">
                <svg width="10" height="10" viewBox="0 0 10 10" fill="#fff">
                    <path d="M0 1.400 4.500.7v4H0zM5.200.6 10 0v4.700H5.200zM0 5.400h4.500v4L0 8.700zM5.200 5.400H10V10l-4.800-.6z" />
                </svg>
            </TaskButton>
            <Search>
                <Stroke w={13} h={13} color="#111" width={2}><circle cx="6.500" cy="6.500" r="5.300" /></Stroke>
                <input placeholder="Escribe aquí para buscar" aria-label="Buscar" />
                <Stroke w={9} h={12} color="#444" width={1} d="M3 2.500q0-2 1.500-2t1.500 2v3.500q0 1.500-1.500 1.500T3 6zM1 5.500Q1 9.200 4.500 9.200T8 5.500M4.500 9.200v2.500" />
            </Search>
            <TaskButton aria-label="Vista de tareas" $w={30}>
                <Stroke w={11} h={10} color="#ddd" width={1} d="M.5 0v1.500H6V0M.5 3.500H6v3H.5zM.5 10V8.500H6V10M9.500 0v2M9.500 3.500v2.500M9.500 7.500V10" />
            </TaskButton>
            <TaskButton aria-label="Explorador">
                <svg width="14" height="12" viewBox="0 0 14 12">
                    <path d="M0 1h5l1 1h8v9.500H0z" fill="#e8b84a" />
                    <path d="M0 3.500h14v8H0z" fill="#fbe08b" />
                    <path d="M2.500 12V6.500h9V12H9V9.500H5V12z" fill="#4aa5e0" />
                </svg>
            </TaskButton>
            <TaskButton aria-label="Chrome" $open>
                <svg width="14" height="14" viewBox="0 0 14 14">
                    <circle cx="7" cy="7" r="7" fill="#ea4335" />
                    <path d="M7 7 .9 3.500A7 7 0 0 0 6 13.900z" fill="#34a853" />
                    <path d="M7 3.800h6.200A7 7 0 0 1 6 13.900L9.500 8.500z" fill="#fbc116" />
                    <circle cx="7" cy="7" r="3.300" fill="#fff" />
                    <circle cx="7" cy="7" r="2.600" fill="#4285f4" />
                </svg>
            </TaskButton>
            <TaskButton aria-label="Reproductor">
                <svg width="14" height="14" viewBox="0 0 14 14">
                    <path d="M1 1h12v12H1z" fill="#5d6971" />
                    <path d="M1 1h11L1 11z" fill="#c3ccd2" />
                    <path d="M4 2 13 7l-9 5z" fill="#35a7e0" />
                    <path d="M5 5 9 7 5 9z" fill="#e5f6ff" />
                </svg>
            </TaskButton>
            <TaskButton aria-label="Photoshop">
                <svg width="13" height="12" viewBox="0 0 13 12">
                    <path d="M.5.5h12v11H.5z" fill="#101b56" stroke="#6c7fd8" />
                    <text x="6.500" y="8.500" textAnchor="middle" fontSize="7" fontWeight="700" fill="#c9d5ff">Ps</text>
                </svg>
            </TaskButton>
            <TaskButton aria-label="MathType" $open>
                <svg width="14" height="14" viewBox="0 0 14 14">
                    <path d="M.5 0h12.500v4h-1.500L10.500 2.500H5L9 7l-4.500 4.500H11l1.500-2H14L13 14H0v-1.500L5 7 .5 1.500z" fill="#35a3ee" />
                </svg>
            </TaskButton>
            <TaskButton aria-label="WhatsApp" $open>
                <svg width="14" height="14" viewBox="0 0 14 14">
                    <path d="M7 0a7 7 0 0 1 0 14q-2 0-3.500-1L0 14l1-3.500A7 7 0 0 1 7 0z" fill="#e9f7ec" />
                    <circle cx="7" cy="7" r="5.900" fill="#2fb843" />
                    <path d="M4.500 3.800q1-.8 1.300.3l.4 1q0 .4-.6 1 1 1.800 2.500 2.300.8-1 1.100-.8l1.300.7q.3.500-.6 1.400-1.300 1-3.600-.5T3.800 5.700q-.2-1.200.7-1.900z" fill="#fff" />
                </svg>
            </TaskButton>
            <TaskButton aria-label="Word" $open $on><WordLogo size={13} /></TaskButton>
            <Tray>
                <Stroke w={8} h={5} width={1.100} d="M.5 4.500 4 1l3.500 3.500" />
                <Stroke w={11} h={9} width={0.9} d="M.5 3v3H2l2.500 2.500v-8L2 3zM6 3q1 1.500 0 3M7.700 1.800q2 2.700 0 5.400M9.300.6q2.500 3.900 0 7.800" />
                <Stroke w={11} h={9} width={0.9} d="M2.500 2h8v4.500h-6M6.500 6.500v2M4.500 8.500h4.500M.5.5H4v2.500H.5zM2.200 3v5.500" />
                <Clock>18:28<br />05/06/2019</Clock>
                <Notifications aria-label="Notificaciones">
                    <svg width="15" height="15" viewBox="0 0 15 15">
                        <path d="M0 0h10v8H5L3 10.500V8H0z" fill="#fff" />
                        <path d="M1.500 2.500h7M1.500 4.200h7M1.500 5.900h4" stroke="#222" strokeWidth=".7" />
                        <circle cx="10" cy="10" r="4.500" fill="#30363d" stroke="#bbb" strokeWidth=".8" />
                        <text x="10" y="12.500" fontSize="7" fill="#fff" textAnchor="middle">2</text>
                    </svg>
                </Notifications>
            </Tray>
        </Taskbar>
    );
}

export default function App() {
    return (
        <Window>
            <GlobalStyle />
            <Top />
            <Ribbon>
                <ClipboardGroup />
                <FontGroup />
                <ParagraphGroup />
                <StylesGroup />
                <EditGroup />
                <AcrobatGroup />
                <Collapse><Stroke w={6} h={4} d="M.5 3.500 3 1l2.500 2.500" color="#666" /></Collapse>
            </Ribbon>
            <Workspace>
                <Editor>
                    <Ruler />
                    <Pages>
                        <LeftPage />
                        <RightPage />
                    </Pages>
                </Editor>
                <Scrollbar>
                    <button aria-label="Arriba"><Stroke w={4} h={3} color="#555" d="M.5 2.500 2 1l1.500 1.500" /></button>
                    <Track><Thumb /></Track>
                    <button aria-label="Abajo"><Caret /></button>
                </Scrollbar>
            </Workspace>
            <Status />
            <WindowsTaskbar />
        </Window>
    );
}
